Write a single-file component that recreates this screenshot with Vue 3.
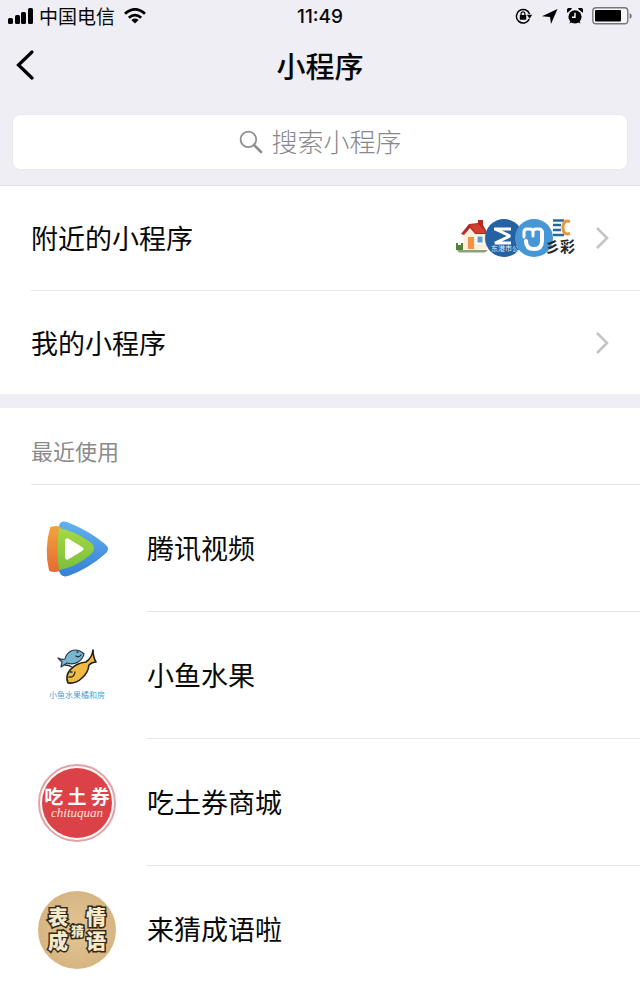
<script setup>
import { ref } from 'vue'

const keyword = ref('')

const apps = [
  { id: 'video', name: '腾讯视频' },
  { id: 'fish', name: '小鱼水果' },
  { id: 'coupon', name: '吃土券商城' },
  { id: 'idiom', name: '来猜成语啦' },
]
</script>

<template>
  <div class="page">
    <header class="header">
      <div class="status">
        <div class="status-side">
          <svg class="signal" width="26" height="16" viewBox="0 0 26 16">
            <rect x="0" y="10" width="5" height="6" rx="1.5" />
            <rect x="7" y="7" width="5" height="9" rx="1.5" />
            <rect x="13" y="4" width="5" height="12" rx="1.5" />
            <rect x="20" y="0" width="5" height="16" rx="1.5" />
          </svg>
          <span class="carrier">中国电信</span>
          <svg width="22" height="16" viewBox="0 0 22 16" fill="none" stroke="#000" stroke-width="2.8">
            <path d="M1 5.8Q11-3 21 5.8" />
            <path d="M4.8 9.8Q11 4.4 17.2 9.8" />
            <path d="M7.4 12Q11 9.2 14.6 12L11 15.6Z" fill="#000" stroke="none" />
          </svg>
        </div>
        <span class="time">11:49</span>
        <div class="status-side status-right">
          <svg width="18" height="16" viewBox="0 0 18 16">
            <path d="M14.3 11.2A6.8 6.8 0 1 1 14.6 6" fill="none" stroke="#000" stroke-width="1.5" />
            <path d="M11.8 6.8h5.4l-2.6 4z" />
            <rect x="4.8" y="7" width="6.4" height="4.8" rx=".6" />
            <path d="M6.1 7.3V5.7a1.9 1.9 0 0 1 3.8 0v1.6" fill="none" stroke="#000" stroke-width="1.2" />
          </svg>
          <svg width="16" height="15" viewBox="0 0 16 15">
            <path d="M15.5 0 9 15 8 8 0 7.3z" />
          </svg>
          <svg width="16" height="16" viewBox="0 0 16 16">
            <circle cx="8" cy="8.8" r="6.6" />
            <path d="M.4 4.8A3 3 0 0 1 5 .8zM15.6 4.8A3 3 0 0 0 11 .8zM2.2 15.6l2-3 1.6 1.4zM13.8 15.6l-2-3-1.6 1.4z" />
            <path d="M8 4.8v4.4H5" fill="none" stroke="#fff" stroke-width="1.4" />
          </svg>
          <svg class="battery" width="40" height="18" viewBox="0 0 40 18">
            <rect x=".8" y=".8" width="35" height="16" rx="3.4" fill="#f6f6f9" stroke="#77777b" stroke-width="1.4" />
            <rect x="3" y="3" width="26" height="11.6" rx="1" />
            <path d="M37.6 6q2.2 1 2.2 3t-2.2 3z" fill="#77777b" />
          </svg>
        </div>
      </div>

      <nav class="nav">
        <button class="back" type="button" aria-label="返回">
          <svg width="18" height="32" viewBox="0 0 18 32" fill="none" stroke="#000" stroke-width="3.2" stroke-linecap="round">
            <path d="M16 3 2.5 16 16 29" />
          </svg>
        </button>
        <h1 class="title">小程序</h1>
      </nav>

      <label class="search">
        <svg width="24" height="24" viewBox="0 0 24 24" fill="none" stroke="#8e8e93">
          <circle cx="9.4" cy="9.4" r="7.8" stroke-width="1.8" />
          <path d="m15 15 7 7" stroke-width="2.6" stroke-linecap="round" />
        </svg>
        <input v-model="keyword" class="search-input" type="text" placeholder="搜索小程序" aria-label="搜索小程序">
      </label>
    </header>

    <main class="content">
      <section class="entries">
        <a class="entry" href="#nearby">
          <span class="entry-name">附近的小程序</span>
          <svg class="nearby" width="122" height="40" viewBox="0 0 122 40">
            <!-- house -->
            <path d="M2 32h31l-3 2.500H4z" fill="#8ea07a" />
            <path d="M9 16 15 9l17 6v16l-13 1-10-1z" fill="#fbeeda" />
            <path d="M6 16 14 6l9-1V2h5v5l5 9H20l-5-6-6 7z" fill="#b52c23" />
            <path d="m15 7 8-1 9 9H20z" fill="#cf4030" />
            <rect x="13" y="19" width="6" height="12" fill="#ef9242" />
            <rect x="22" y="18" width="6" height="7" fill="#579fc7" stroke="#fff" />
            <path d="M1 25h2v2h3v-2h2v7H1z" fill="#528237" />
            <!-- dark badge -->
            <circle cx="49" cy="20" r="19" fill="#2562a3" />
            <path d="M39 11h17M40 11l15 7-15 7h16" fill="none" stroke="#fff" stroke-width="3" stroke-linejoin="bevel" />
            <text class="badge-text" x="36" y="33" font-size="7" fill="#e0eefa">东港市公交</text>
            <!-- light badge -->
            <circle cx="79" cy="20" r="19" fill="#4796d5" />
            <path d="M69 19v-5q0-3 3-3h3q3 0 3 3v4M78 14q0-3 3-3h3q3 0 3 3" fill="none" stroke="#fff" stroke-width="3" stroke-linecap="round" />
            <path d="M71 23q0 8 8 8t8-8v-9" fill="none" stroke="#fff" stroke-width="4" stroke-linecap="round" />
            <!-- striped mark -->
            <path d="M98 2.500h11M98 7h8M98 12h8M98 17h11" fill="none" stroke="#28679d" stroke-width="2.600" />
            <path d="M115 3.500q-7-2-7 6t7 6" fill="none" stroke="#e8943a" stroke-width="3" />
            <text class="badge-text bold" x="90" y="34" font-size="15" fill="#26282d">彡彩</text>
          </svg>
          <svg class="chevron" width="14" height="24" viewBox="0 0 14 24">
            <path d="m2 2 10 10L2 22" />
          </svg>
        </a>
        <a class="entry" href="#mine">
          <span class="entry-name">我的小程序</span>
          <svg class="chevron" width="14" height="24" viewBox="0 0 14 24">
            <path d="m2 2 10 10L2 22" />
          </svg>
        </a>
      </section>

      <section class="recent">
        <h2 class="recent-title">最近使用</h2>
        <ul class="apps">
          <li v-for="app in apps" :key="app.id">
            <a class="app" :href="'#' + app.id">
              <svg v-if="app.id === 'video'" class="logo" viewBox="0 0 80 80">
                <defs>
                  <linearGradient id="blue" x2="0" y2="1">
                    <stop stop-color="#62b2ee" />
                    <stop offset="1" stop-color="#367fd6" />
                  </linearGradient>
                  <linearGradient id="orange" x2="0" y2="1">
                    <stop stop-color="#f0a33c" />
                    <stop offset="1" stop-color="#e66b32" />
                  </linearGradient>
                  <linearGradient id="green" x2="0" y2="1">
                    <stop stop-color="#a5d943" />
                    <stop offset="1" stop-color="#79c13a" />
                  </linearGradient>
                </defs>
                <path d="M22 17q1-6 8-4 21 8 38 22 6 5 0 10Q51 60 31 67q-7 2-9-5-5-22 0-45z" fill="url(#blue)" />
                <path d="M14 19q5-2 9 0l4 21-5 21q-5 2-9 0Q8 40 14 19z" fill="url(#orange)" stroke="url(#orange)" stroke-width="2" stroke-linejoin="round" />
                <path d="M22 19q16 3 31 14 8 6 0 13-14 12-31 15-3-21 0-42z" fill="url(#green)" />
                <path d="M28 31q1-3 4-1l13 8q3 2 0 4l-13 8q-4 2-4-2z" fill="#fff" />
              </svg>

              <svg v-else-if="app.id === 'fish'" class="logo" viewBox="0 0 80 80">
                <path d="M47 18Q41 12 34 15q-5 3-6 8-3 1-7-1l4 4-1 5 6-4q6 2 11-1 5-3 6-8z" fill="#79b6d3" stroke="#243744" stroke-width="1.2" stroke-linejoin="round" />
                <path d="M49 26q6-4 7-12 0 7 3 12-4 0-7 3-1 8-7 13-6 6-14 5-3-7 2-13 6-7 16-8z" fill="#f0ba43" stroke="#222019" stroke-width="1.600" stroke-linejoin="round" />
                <path d="M39 20q3 2 5-1M40 16h1M32 41q5 1 6-5M33 36h2M28 29q4 0 7 2" fill="none" stroke="#222d32" stroke-width="1.300" stroke-linecap="round" />
                <text class="fish-text" x="40" y="62" text-anchor="middle">小鱼水果橘和房</text>
              </svg>

              <svg v-else-if="app.id === 'coupon'" class="logo" viewBox="0 0 80 80">
                <circle cx="40" cy="40" r="38" fill="#fff6f5" stroke="#dfa4a7" stroke-width="2" />
                <circle cx="40" cy="40" r="35" fill="#db4248" />
                <text class="coupon-name" x="40" y="41" text-anchor="middle">吃 土 券</text>
                <text class="coupon-latin" x="40" y="54" text-anchor="middle">chituquan</text>
              </svg>

              <svg v-else class="logo" viewBox="0 0 80 80">
                <defs>
                  <radialGradient id="sand">
                    <stop stop-color="#e3c594" />
                    <stop offset="1" stop-color="#d6b582" />
                  </radialGradient>
                </defs>
                <circle cx="40" cy="40" r="39" fill="url(#sand)" />
                <g class="idiom-text">
                  <text x="11" y="35">表</text>
                  <text x="49" y="35">情</text>
                  <text x="11" y="59">成</text>
                  <text x="49" y="59">语</text>
                  <text class="idiom-small" x="34" y="46">猜</text>
                </g>
              </svg>
              <span class="app-name">{{ app.name }}</span>
            </a>
          </li>
        </ul>
      </section>
    </main>
  </div>
</template>

<style>
body {
  margin: 0;
  background: #fff;
}
</style>

<style scoped>
.page {
  display: flex;
  flex-direction: column;
  height: 100vh;
  font-family: "Noto Sans CJK SC", sans-serif;
  color: #080808;
}

.header {
  flex: none;
  background: #efeef5;
  border-bottom: 1px solid #e1e1e6;
  padding-bottom: 15px;
}

.status {
  display: grid;
  grid-template-columns: 1fr auto 1fr;
  align-items: center;
  height: 32px;
  padding: 0 8px;
}

.status-side {
  display: flex;
  align-items: center;
  gap: 9px;
}

.status-right {
  justify-content: flex-end;
}

.carrier {
  margin-left: -4px;
  font-size: 19px;
  line-height: 28px;
}

.time {
  font-family: Inter, sans-serif;
  font-size: 19px;
  font-weight: 500;
}

.nav {
  display: grid;
  grid-template-columns: 1fr auto 1fr;
  align-items: center;
  height: 66px;
}

.back {
  display: flex;
  justify-self: start;
  padding: 8px 16px;
  border: none;
  background: none;
  cursor: pointer;
}

.title {
  margin: 0;
  font-size: 29px;
  font-weight: 500;
  line-height: 40px;
}

.search {
  display: flex;
  align-items: center;
  justify-content: center;
  gap: 9px;
  height: 54px;
  margin: 16px 12px 0;
  border: 1px solid #e8e8ed;
  border-radius: 8px;
  background: #fff;
}

.search-input {
  width: 5em;
  padding: 0 0 2px;
  border: none;
  outline: none;
  background: none;
  font-family: inherit;
  font-size: 26px;
  line-height: 40px;
}

.search-input::placeholder {
  color: #88888c;
  font-weight: 300;
  opacity: 1;
}

.content {
  flex: 1;
  min-height: 0;
  overflow-y: auto;
  scrollbar-width: none;
}

.entries {
  padding-left: 31px;
  border-bottom: 14px solid #efeef5;
}

.entry {
  display: flex;
  align-items: center;
  box-sizing: border-box;
  height: 104px;
  padding-right: 31px;
  color: inherit;
  text-decoration: none;
}

.entry + .entry {
  border-top: 1px solid #e5e5e5;
}

.entry-name {
  flex: 1;
  font-size: 27px;
  line-height: 40px;
}

.nearby {
  margin-right: 18px;
}

.badge-text {
  font-family: "Noto Sans CJK SC", sans-serif;
}

.bold {
  font-weight: 700;
}

.chevron {
  fill: none;
  stroke: #c4c4c8;
  stroke-width: 2.6;
}

.recent-title {
  margin: 0;
  padding: 26px 0 18px;
  margin-left: 31px;
  border-bottom: 1px solid #e5e5e5;
  color: #8b8b8b;
  font-size: 22px;
  font-weight: 400;
  line-height: 32px;
}

.apps {
  margin: 0;
  padding: 0;
  list-style: none;
}

.app {
  display: flex;
  align-items: center;
  gap: 30px;
  padding-left: 37px;
  color: inherit;
  text-decoration: none;
}

.logo {
  flex: none;
  width: 80px;
  height: 80px;
}

.app-name {
  flex: 1;
  border-bottom: 1px solid #e5e5e5;
  font-size: 27px;
  line-height: 126px;
}

.fish-text {
  fill: #4ba3d0;
  font-family: "Noto Sans CJK SC", sans-serif;
  font-size: 8px;
}

.coupon-name {
  fill: #fff;
  font-family: "Noto Sans CJK SC", sans-serif;
  font-size: 19px;
  font-weight: 700;
}

.coupon-latin {
  fill: #ffe0dc;
  font-family: "Liberation Serif", serif;
  font-size: 13px;
  font-style: italic;
}

.idiom-text {
  fill: #f6e9c8;
  stroke: #35291c;
  stroke-width: 3px;
  paint-order: stroke;
  font-family: "Noto Sans CJK SC", sans-serif;
  font-size: 20px;
  font-weight: 900;
}

.idiom-small {
  font-size: 13px;
}
</style>
